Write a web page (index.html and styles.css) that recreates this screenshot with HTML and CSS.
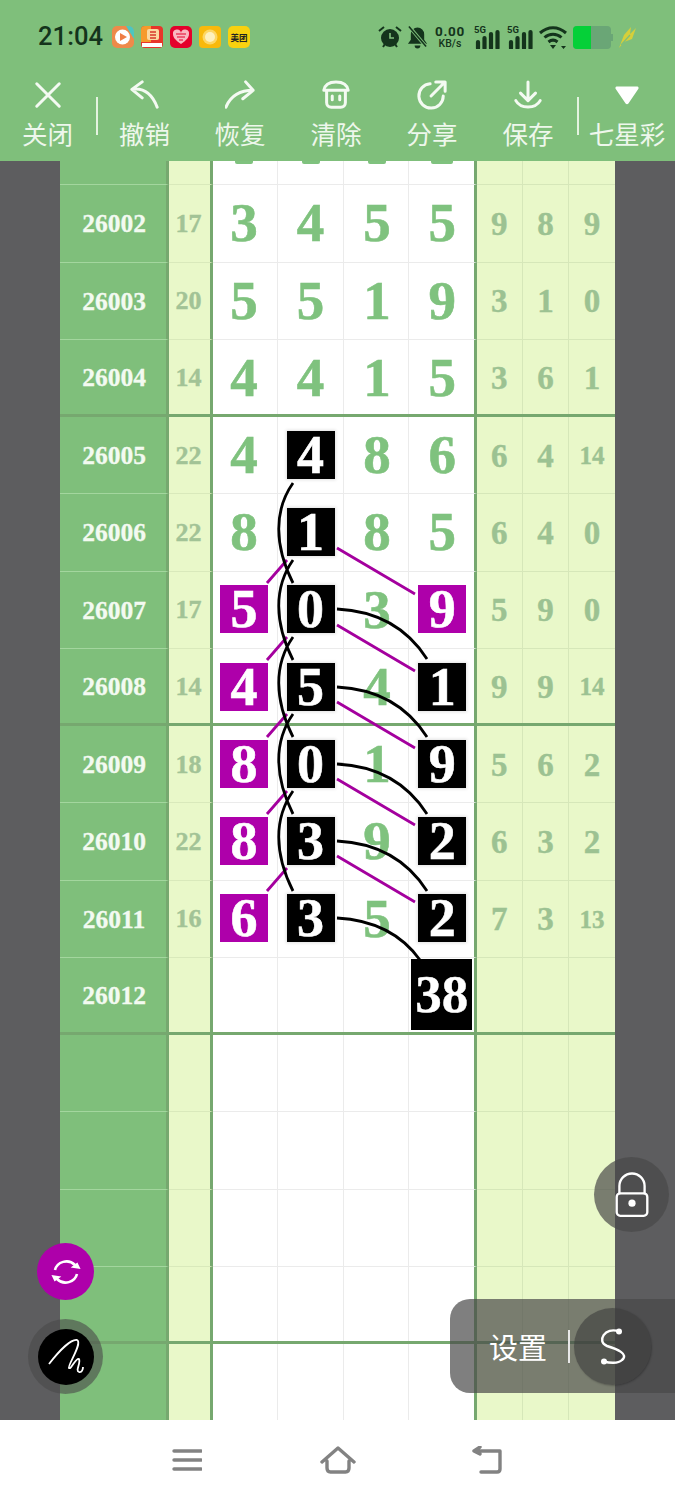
FILE: index.html
```html
<!DOCTYPE html>
<html lang="zh">
<head>
<meta charset="utf-8">
<title>七星彩</title>
<link rel="stylesheet" href="styles.css">
</head>
<body>
<div class="phone">
  <header class="status">
    <span class="time">21:04</span>
    <div class="apps">
      <svg class="app" viewBox="0 0 22 22"><rect width="22" height="22" rx="5" fill="#ee8a4a"/><path d="M14 0h3a5 5 0 0 1 5 5v8z" fill="#4cc6c0"/><circle cx="10.500" cy="11" r="7.500" fill="#fff"/><path d="M8 7l7 4-7 4z" fill="#ef7d45"/></svg>
      <svg class="app" viewBox="0 0 22 22"><rect width="22" height="22" rx="4" fill="#e8352a"/><path d="M0 4a4 4 0 0 1 4-4h6v16H0z" fill="#f59a2c"/><rect x="6" y="3" width="12" height="11" rx="2" fill="#fbd9a0"/><path d="M9 6h6M9 9h6M9 12h6" stroke="#d8392b" stroke-width="1.500"/><rect x="1" y="17" width="20" height="4" fill="#fff"/></svg>
      <svg class="app" viewBox="0 0 22 22"><rect width="22" height="22" rx="5" fill="#e4002b"/><path d="M11 18C5 14 3 11 3 8a4 4 0 0 1 8-1 4 4 0 0 1 8 1c0 3-2 6-8 10z" fill="#f9b8c0"/><path d="M6 8h10M7 11h8M9 14h4" stroke="#e4002b" stroke-width="1.200"/></svg>
      <svg class="app" viewBox="0 0 22 22"><rect width="22" height="22" rx="4" fill="#f8b90c"/><circle cx="11" cy="11" r="7.500" fill="#fdd765"/><circle cx="11" cy="11" r="5" fill="#fdf0bf"/></svg>
      <span class="app meituan">美团</span>
    </div>
    <div class="sys">
      <svg class="alarm" viewBox="0 0 24 24"><circle cx="12" cy="13" r="9" fill="#14341c"/><path d="M1 6l5-4M23 6l-5-4M5 22l2-3M19 22l-2-3" stroke="#14341c" stroke-width="2"/><path d="M12 8v5h4" stroke="#7fbf7b" stroke-width="1.600" fill="none"/></svg>
      <svg class="bell" viewBox="0 0 22 24"><path d="M11 2a7 7 0 0 0-7 7v6l-3 4h20l-3-4V9a7 7 0 0 0-7-7z" fill="#14341c"/><path d="M8 21a3 3 0 0 0 6 0z" fill="#14341c"/><path d="M3 2l17 20" stroke="#7fbf7b" stroke-width="3.500"/><path d="M2 1l18 21" stroke="#14341c" stroke-width="1.600"/></svg>
      <div class="speed"><span class="speed-n">0.00</span><span class="speed-u">KB/s</span></div>
      <div class="sig"><span class="g">5G</span><svg viewBox="0 0 26 24"><path d="M4 17v6M10.500 13v10M17 9v14M23.500 7v16" stroke="#14341c" stroke-width="4.200" stroke-linecap="round"/></svg></div>
      <div class="sig sig2"><span class="g">5G</span><svg viewBox="0 0 26 24"><path d="M4 17v6M10.500 13v10M17 9v14M23.500 7v16" stroke="#14341c" stroke-width="4.200" stroke-linecap="round"/></svg></div>
      <svg class="wifi" viewBox="0 0 28 24"><path d="M1 8c8-7 18-7 26 0M5.500 12.500c5-4.500 12-4.500 17 0M9.500 17c3-2.500 6-2.500 9 0" fill="none" stroke="#14341c" stroke-width="3"/><path d="M11 20h6l-3 4zM22 21h5l-2.500 3z" fill="#14341c"/></svg>
      <div class="batt"><span class="batt-fill"></span></div>
      <svg class="bolt" viewBox="0 0 20 24"><path d="M2 23L7 10l7-8-1 7 6-6-4 11-8 3z" fill="#d6cf3a"/><path d="M4 20l9-10" stroke="#7fbf7b" stroke-width="1.200"/></svg>
    </div>
  </header>

  <nav class="toolbar">
    <div class="tool t-first"><svg viewBox="0 0 32 32"><path d="M4 4l24 24M28 4L4 28" class="ic"/></svg><span>关闭</span></div>
    <i class="sep"></i>
    <div class="tool t-undo"><svg viewBox="0 0 32 32"><path d="M13 2L2 10l11 9M2 10c13-2 22 6 27 19" class="ic"/></svg><span>撤销</span></div>
    <div class="tool"><svg viewBox="0 0 32 32"><path d="M22 2l8 9-11 9M1 29C6 17 16 11 30 11" class="ic"/></svg><span>恢复</span></div>
    <div class="tool"><svg viewBox="0 0 32 32"><path d="M3 11C4 5 9 2 16 2s12 3 13 9zM6 11v13c0 3 2 5 5 5h10c3 0 5-2 5-5V11M12 17v4M20 17v4" class="ic"/></svg><span>清除</span></div>
    <div class="tool"><svg viewBox="0 0 32 32"><path d="M14 4A13 13 0 1 0 28 17M15 17L29 3M20 2h10v10" class="ic"/></svg><span>分享</span></div>
    <div class="tool"><svg viewBox="0 0 32 32"><path d="M16 2v20M8 14l8 8 8-8M3 22c5 9 21 9 26 0" class="ic"/></svg><span>保存</span></div>
    <i class="sep"></i>
    <div class="tool t-last"><svg viewBox="0 0 32 32"><path d="M5 7h22a1.500 1.500 0 0 1 1 2.500L17.500 25a2 2 0 0 1-3 0L4 9.500A1.500 1.500 0 0 1 5 7z" fill="#fff"/></svg><span>七星彩</span></div>
  </nav>

  <main class="view">
    <div class="table">
      <section class="group">
        <div class="row peek"><b class="l"></b><b class="s"></b><b class="d"><i class="bump"></i></b><b class="d"><i class="bump"></i></b><b class="d"><i class="bump"></i></b><b class="d e"><i class="bump bump-w"></i></b><b class="r"></b><b class="r"></b><b class="r"></b></div>
        <div class="row"><b class="l">26002</b><b class="s">17</b><b class="d">3</b><b class="d">4</b><b class="d">5</b><b class="d e">5</b><b class="r">9</b><b class="r">8</b><b class="r">9</b></div>
        <div class="row"><b class="l">26003</b><b class="s">20</b><b class="d">5</b><b class="d">5</b><b class="d">1</b><b class="d e">9</b><b class="r">3</b><b class="r">1</b><b class="r">0</b></div>
        <div class="row"><b class="l">26004</b><b class="s">14</b><b class="d">4</b><b class="d">4</b><b class="d">1</b><b class="d e">5</b><b class="r">3</b><b class="r">6</b><b class="r">1</b></div>
      </section>
      <section class="group">
        <div class="row"><b class="l">26005</b><b class="s">22</b><b class="d">4</b><b class="d"><i class="k">4</i></b><b class="d">8</b><b class="d e">6</b><b class="r">6</b><b class="r">4</b><b class="r w">14</b></div>
        <div class="row"><b class="l">26006</b><b class="s">22</b><b class="d">8</b><b class="d"><i class="k">1</i></b><b class="d">8</b><b class="d e">5</b><b class="r">6</b><b class="r">4</b><b class="r">0</b></div>
        <div class="row"><b class="l">26007</b><b class="s">17</b><b class="d"><i class="m">5</i></b><b class="d"><i class="k">0</i></b><b class="d">3</b><b class="d e"><i class="m">9</i></b><b class="r">5</b><b class="r">9</b><b class="r">0</b></div>
        <div class="row"><b class="l">26008</b><b class="s">14</b><b class="d"><i class="m">4</i></b><b class="d"><i class="k">5</i></b><b class="d">4</b><b class="d e"><i class="k">1</i></b><b class="r">9</b><b class="r">9</b><b class="r w">14</b></div>
      </section>
      <section class="group">
        <div class="row"><b class="l">26009</b><b class="s">18</b><b class="d"><i class="m">8</i></b><b class="d"><i class="k">0</i></b><b class="d">1</b><b class="d e"><i class="k">9</i></b><b class="r">5</b><b class="r">6</b><b class="r">2</b></div>
        <div class="row"><b class="l">26010</b><b class="s">22</b><b class="d"><i class="m">8</i></b><b class="d"><i class="k">3</i></b><b class="d">9</b><b class="d e"><i class="k">2</i></b><b class="r">6</b><b class="r">3</b><b class="r">2</b></div>
        <div class="row"><b class="l">26011</b><b class="s">16</b><b class="d"><i class="m">6</i></b><b class="d"><i class="k">3</i></b><b class="d">5</b><b class="d e"><i class="k">2</i></b><b class="r">7</b><b class="r">3</b><b class="r w">13</b></div>
        <div class="row"><b class="l">26012</b><b class="s"></b><b class="d"></b><b class="d"></b><b class="d"></b><b class="d e"><i class="big">38</i></b><b class="r"></b><b class="r"></b><b class="r"></b></div>
      </section>
      <section class="group">
        <div class="row"><b class="l"></b><b class="s"></b><b class="d"></b><b class="d"></b><b class="d"></b><b class="d e"></b><b class="r"></b><b class="r"></b><b class="r"></b></div>
        <div class="row"><b class="l"></b><b class="s"></b><b class="d"></b><b class="d"></b><b class="d"></b><b class="d e"></b><b class="r"></b><b class="r"></b><b class="r"></b></div>
        <div class="row"><b class="l"></b><b class="s"></b><b class="d"></b><b class="d"></b><b class="d"></b><b class="d e"></b><b class="r"></b><b class="r"></b><b class="r"></b></div>
        <div class="row"><b class="l"></b><b class="s"></b><b class="d"></b><b class="d"></b><b class="d"></b><b class="d e"></b><b class="r"></b><b class="r"></b><b class="r"></b></div>
      </section>
      <section class="group">
        <div class="row"><b class="l"></b><b class="s"></b><b class="d"></b><b class="d"></b><b class="d"></b><b class="d e"></b><b class="r"></b><b class="r"></b><b class="r"></b></div>
      </section>
    </div>
    <svg class="links" viewBox="0 161 675 1259">
      <g class="pl">
        <path d="M337 548L415 594M337 625L415 671M337 702L415 748M337 779L415 825M337 856L415 902"/>
        <path d="M267 583L287 560M267 660L287 637M267 737L287 714M267 814L287 791M267 891L287 868"/>
      </g>
      <g class="bk">
        <path d="M293 483C274 510 274 545 293 583M293 560C274 587 274 622 293 660M293 637C274 664 274 699 293 737M293 714C274 741 274 776 293 814M293 791C274 818 274 853 293 891"/>
        <path d="M337 609Q397 612 427 659M337 687Q397 690 427 737M337 764Q397 767 427 814M337 841Q397 844 427 891M337 918Q392 921 420 960"/>
      </g>
    </svg>
  </main>

  <footer class="navbar">
    <svg class="nav-menu" viewBox="0 0 30 22"><path d="M2 2h27M2 11h27M2 20h27"/></svg>
    <svg class="nav-home" viewBox="0 0 36 28"><path d="M2 16L18 2l16 14M7 15v7c0 2.500 1 4 3.500 4h15c2.500 0 3.500-1.500 3.500-4v-7"/></svg>
    <svg class="nav-back" viewBox="0 0 32 28"><path d="M8 1L2 5l6 3M3 5h25v18c0 2-1 3-3 3H9"/></svg>
  </footer>

  <div class="fab sync"><svg viewBox="0 0 32 32"><path d="M5 14C7 6 18 2 25 9M27 18c-2 8-13 12-20 5" fill="none" stroke="#fff" stroke-width="2.600"/><path d="M20 11h10l-4-6zM12 21H2l4 6z" fill="#fff" transform="rotate(8 16 16)"/></svg></div>
  <div class="halo"><div class="pen"><svg viewBox="0 0 56 56"><path d="M11 35C21 22 33 10 39 11C45 14 29 37 31 39C33 41 38 28 41 30C43 34 37 42 41 43C44 44 45 40 45 38" fill="none" stroke="#fff" stroke-width="1.800"/></svg></div></div>
  <div class="lock"><svg viewBox="0 0 40 52"><path d="M6 24V15a14 14 0 0 1 28 0v9" fill="none" stroke="#fff" stroke-width="2.600"/><rect x="3" y="23" width="34" height="25" rx="4" fill="none" stroke="#fff" stroke-width="2.600"/><circle cx="20" cy="34" r="4" fill="#fff"/></svg></div>
  <div class="pill">
    <span class="pill-t">设置</span>
    <i class="pill-sep"></i>
    <div class="pill-c"><svg viewBox="0 0 40 50"><path d="M26 9.500C12 4 3 20 14 24C24 27 36 32 29 38C25 42 16 41 11 39.500" fill="none" stroke="#fff" stroke-width="2.400"/><circle cx="26" cy="9.500" r="3" fill="#fff"/><circle cx="11" cy="39.500" r="3" fill="#fff"/></svg></div>
  </div>
</div>
</body>
</html>
```
FILE: styles.css
```css
* { box-sizing: border-box; }
html, body { margin: 0; padding: 0; }
body { background: #5d5d5f; }
.phone { position: relative; width: 675px; height: 1500px; overflow: hidden; display: flex; flex-direction: column; font-family: "Noto Sans CJK SC", "Noto Sans", sans-serif; }

/* status bar */
.status { height: 72px; flex: none; background: #7fbf7b; display: flex; align-items: center; padding: 2px 0 0 38px; color: #14341c; }
.time { font: 500 25.500px/1 Roboto, sans-serif; width: 74px; letter-spacing: .1px; }
.apps { display: flex; gap: 7px; align-items: center; margin-left: 0; }
.app { width: 22px; height: 22px; display: block; }
.meituan { background: #f9d10f; border-radius: 5px; font: 700 8.500px/22px "Noto Sans CJK SC", sans-serif; text-align: center; color: #222; white-space: nowrap; overflow: hidden; }
.sys { margin-left: 128px; display: flex; align-items: center; }
.alarm { width: 24px; height: 24px; }
.bell { width: 21px; height: 24px; margin-left: 5px; }
.speed { width: 32px; margin-left: 6px; display: flex; flex-direction: column; align-items: center; font-family: Roboto, sans-serif; font-weight: 700; }
.speed-n { font-size: 13.500px; line-height: 13px; letter-spacing: .7px; }
.speed-u { font-size: 10.500px; line-height: 11px; font-weight: 500; }
.sig { position: relative; width: 26px; height: 24px; margin-left: 8px; }
.sig2 { margin-left: 7px; }
.sig svg { display: block; width: 26px; height: 24px; }
.g { position: absolute; left: 0; top: -1px; font: 700 9.500px/11px Roboto, sans-serif; z-index: 1; }
.wifi { width: 28px; height: 24px; margin-left: 6px; }
.batt { position: relative; width: 38px; height: 23px; margin-left: 6px; border-radius: 4px; background: #6aa676; display: flex; }
.batt::after { content: ""; position: absolute; right: -2px; top: 8px; width: 2px; height: 7px; background: #6aa676; }
.batt-fill { display: block; width: 18px; height: 100%; background: #05d038; border-radius: 4px 0 0 4px; }
.bolt { width: 20px; height: 24px; margin-left: 6px; }

/* toolbar */
.toolbar { height: 89px; flex: none; background: #7fbf7b; display: flex; position: relative; z-index: 3; }
.tool { width: 96px; flex: none; display: flex; flex-direction: column; align-items: center; color: #eef7ec; }
.tool svg { width: 30px; height: 30px; margin-top: 8px; display: block; }
.tool span { font-size: 25.500px; line-height: 32px; margin-top: 7px; white-space: nowrap; }
.ic { fill: none; stroke: #f4faf2; stroke-width: 3.200; stroke-linecap: round; stroke-linejoin: round; }
.t-first { width: 95px; }
.sep { display: block; width: 2px; height: 38px; margin: 25px 0 0 1px; background: #e4f3e0; flex: none; }
.t-undo { margin-left: -1px; width: 95px; }
.sep + .t-last { margin-left: 0; }

/* table */
.view { position: relative; height: 1259px; flex: none; overflow: hidden; background: #5d5d5f; }
.table { width: 555px; margin: 0 0 0 60px; }
.group { border-bottom: 3px solid #76a86f; }
.group:last-of-type { border-bottom: 1px solid #76a86f; }
.row { display: grid; grid-template-columns: 109px 44px 65px 66px 65px 67.500px 46.500px 46px 46px; height: 77.250px; }
.peek { height: 24.250px; }
.group .row:last-child { height: 74.250px; }
.group:last-of-type .row:last-child { height: 76.250px; }
.row > b { display: flex; align-items: center; justify-content: center; font-family: "Liberation Serif", serif; font-weight: 700; border-bottom: 1px solid #ebebeb; border-right: 1px solid #ebebeb; background: #fff; min-width: 0; }
.group .row:last-child > b { border-bottom: 0; margin-bottom: 0; }
.row > .l { background: #7fbf7b; color: #f3faf1; font-size: 25.500px; border-right: 3px solid #76a86f; border-bottom-color: #a3d69e; padding: 2px 0 0 2px; -webkit-text-stroke: .3px #f3faf1; }
.row > .s { background: #e9f8c9; color: #a2c396; font-size: 26px; border-right: 3px solid #76a86f; border-bottom-color: #d9e9bb; padding: 1px 2px 0 0; -webkit-text-stroke: .4px #a2c396; }
.row > .d { color: #7fc27e; font-size: 55px; padding-bottom: 1px; -webkit-text-stroke: .6px #7fc27e; }
.row > .d:nth-child(3) { padding-right: 2px; }
.row > .d:nth-child(5) { padding-left: 2px; }
.row > .e { border-right: 3px solid #76a86f; padding-left: 2px; }
.row > .r { background: #e9f8c9; color: #9cc292; font-size: 33px; border-color: #d6e7b9; padding-top: 2px; -webkit-text-stroke: .4px #9cc292; }
.row > .r:last-child { border-right: 0; }
.row > .w { font-size: 25px; }
.peek > b { align-items: flex-start; padding-bottom: 0; }
.bump { display: block; width: 18px; height: 3px; background: #7fc27e; border-radius: 0 0 2px 2px; }
.bump-w { width: 22px; }
.group .row:last-child > .l, .group .row:last-child > .s, .group .row:last-child > .d, .group .row:last-child > .r { padding-top: 3px; }
.k, .m { font-style: normal; width: 48px; height: 48px; display: flex; align-items: center; justify-content: center; color: #fff; font-size: 54px; line-height: 48px; box-shadow: 0 0 3px 1px rgba(0,0,0,.12); -webkit-text-stroke: .6px #fff; }
.k { background: #000; }
.m { background: #ae00aa; box-shadow: none; }
.big { font-style: normal; width: 61px; height: 71px; margin: -3px 0 0 -1px; flex: none; display: flex; align-items: center; justify-content: center; background: #000; color: #fff; font-size: 53px; -webkit-text-stroke: .4px #fff; }

.links { position: absolute; left: 0; top: 0; width: 675px; height: 1259px; pointer-events: none; }
.links path { fill: none; stroke-width: 2.800px; }
.pl path { stroke: #a4009e; }
.bk path { stroke: #000; }

/* nav */
.navbar { height: 80px; flex: 1; background: #fff; position: relative; z-index: 3; display: flex; align-items: center; padding: 0 0 0 172px; }
.navbar svg { display: block; fill: none; stroke: #828282; stroke-width: 3.400px; stroke-linecap: round; stroke-linejoin: round; }
.nav-menu { width: 30px; height: 22px; }
.nav-home { width: 36px; height: 28px; margin-left: 118px; }
.nav-back { width: 32px; height: 28px; margin-left: 116px; }

/* floating controls */
.fab, .halo, .lock, .pill, .pen, .pill-c { display: flex; align-items: center; justify-content: center; }
.fab { position: absolute; z-index: 2; left: 37px; top: 1243px; width: 57px; height: 57px; border-radius: 50%; background: #ae00aa; }
.fab svg { width: 32px; height: 32px; }
.halo { position: absolute; z-index: 2; left: 28px; top: 1319px; width: 75px; height: 75px; border-radius: 50%; background: rgba(73,73,73,.6); }
.pen { width: 56px; height: 56px; border-radius: 50%; background: #000; }
.pen svg { width: 56px; height: 56px; }
.lock { position: absolute; z-index: 2; left: 594px; top: 1157px; width: 75px; height: 75px; border-radius: 50%; background: rgba(73,73,73,.7); }
.lock svg { width: 36px; height: 48px; margin-top: 2px; }
.pill { position: absolute; z-index: 2; left: 450px; top: 1299px; width: 225px; height: 94px; border-radius: 20px 0 0 20px; background: rgba(73,73,73,.7); justify-content: flex-start; padding-left: 39px; }
.pill-t { color: #fff; font-size: 29px; line-height: 1; }
.pill-sep { display: block; width: 2px; height: 33px; margin-left: 21px; background: #e8e8e8; }
.pill-c { position: absolute; left: 124px; top: 9px; width: 77px; height: 77px; border-radius: 50%; background: rgba(60,60,60,.6); box-shadow: 1px 1px 2px rgba(0,0,0,.25); }
.pill-c svg { width: 40px; height: 50px; }
```
